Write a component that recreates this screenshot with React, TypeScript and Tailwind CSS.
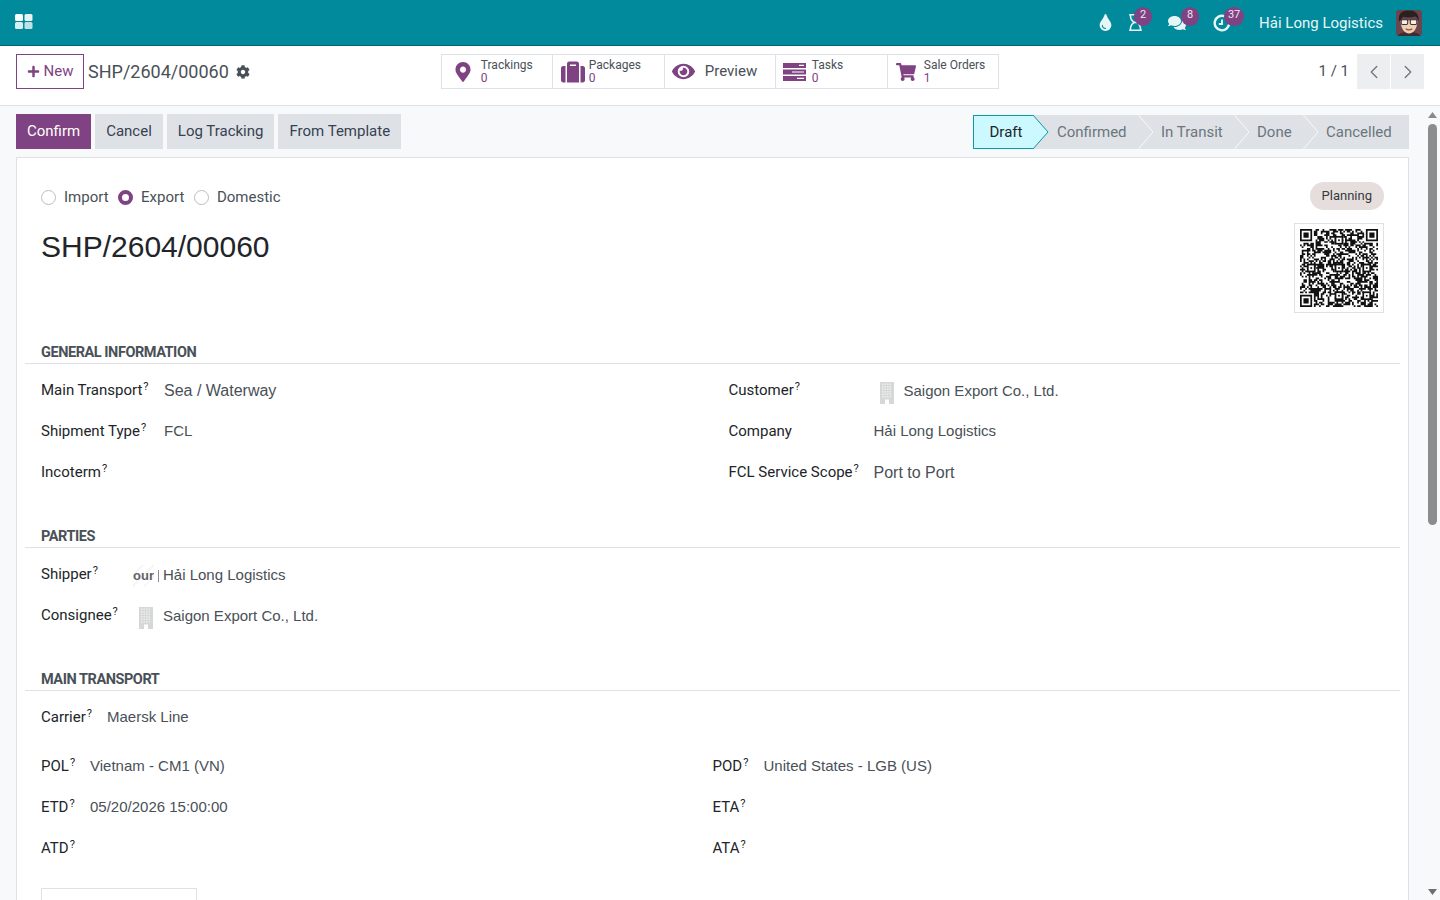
import React from "react";
import { ChevronLeft, ChevronRight } from "lucide-react";
import {
  FaCog,
  FaComments,
  FaEye,
  FaMapMarkerAlt,
  FaPlus,
  FaRegHourglass,
  FaShoppingCart,
  FaSuitcase,
  FaTint,
} from "react-icons/fa";

const roboto = "font-['Roboto',sans-serif]";
const liberation = "font-['Liberation_Sans',sans-serif]";

const AppsIcon = () => (
  <svg width="18" height="15" viewBox="0 0 18 15" fill="#fff">
    <rect x="0" y="0" width="8" height="7" rx="1.5" />
    <rect x="9.5" y="0" width="8" height="7" rx="1.5" opacity="0.9" />
    <rect x="0" y="8" width="8" height="7" rx="1.5" opacity="0.85" />
    <rect x="9.5" y="8" width="8" height="7" rx="1.5" opacity="0.75" />
  </svg>
);

const ClockIcon = () => (
  <svg width="18" height="18" viewBox="0 0 18 18" fill="none" stroke="#e6f6f7" strokeWidth="2.4">
    <path d="M11.5 2.2A7.3 7.3 0 1 0 16.3 9" strokeLinecap="round" />
    <path d="M9 5.5V10H5.8" strokeWidth="2" />
  </svg>
);

const TasksIcon = () => (
  <svg width="23" height="20" viewBox="0 0 23 20" fill="#7f4282">
    <path d="M0 1h23v5H0zM0 7.500h23v5H0zM0 14h23v5H0z" />
    <path d="M16 2.800h5v1.200h-5zM9 9.400h12v1.200H9zM14 15.800h7v1.200h-7z" fill="#fff" />
  </svg>
);

const Avatar = () => (
  <svg width="26" height="26" viewBox="3 3 20 20" className="rounded-[3px]">
    <rect x="3" y="3" width="20" height="20" fill="#6b4450" />
    <path d="M3 26c1-5 5-6 10-6s9 1 10 6z" fill="#3d2c30" />
    <path d="M6.500 11c0 6 3 10 6.500 10s6.500-4 6.500-10z" fill="#f1cdb0" />
    <path d="M5.500 12C4 6 8 3 13 3.500c3-.5 8 1 7.500 8.500-1-2-1.500-3.500-2.500-4-3 1-7 1-9.500.2C7.500 9 7 10.500 5.500 12z" fill="#2a2020" />
    <rect x="7" y="10.500" width="5" height="3.600" rx="1" fill="#f7efe6" stroke="#333" strokeWidth="0.8" />
    <rect x="14" y="10.500" width="5" height="3.600" rx="1" fill="#f7efe6" stroke="#333" strokeWidth="0.8" />
    <path d="M10.500 17.500c1.500 1 3.500 1 5 0" stroke="#8a5145" strokeWidth="0.9" fill="none" />
  </svg>
);

const windowRows = [1.5, 4, 6.5, 9, 11.5, 14];
const windowCols = [2, 4.500, 7, 9.500];

const BuildingIcon = () => (
  <svg width="14" height="22" viewBox="0 0 14 22" className="shrink-0">
    <rect width="14" height="22" fill="#d6d8d8" />
    <g fill="#eceded">
      {windowRows.map((y) =>
        windowCols.map((x) => <rect key={`${x}-${y}`} x={x} y={y} width="1.5" height="1.5" />),
      )}
    </g>
    <rect x="5" y="17.500" width="4" height="4.500" fill="#fff" />
  </svg>
);

// fake qr pattern, same modules on every render
const QrCode = () => {
  const size = 45;
  const inFinder = (x: number, y: number) =>
    (x < 8 && y < 8) || (x >= size - 8 && y < 8) || (x < 8 && y >= size - 8);
  const cells: string[] = [];
  let seed = 60;
  for (let y = 0; y < size; y++) {
    for (let x = 0; x < size; x++) {
      seed = (seed * 1103515245 + 12345) & 0x7fffffff;
      if (!inFinder(x, y) && (seed >> 16) % 100 < 52) {
        cells.push(`M${x} ${y}h1v1h-1z`);
      }
    }
  }
  const finder = (x: number, y: number) =>
    `M${x} ${y}h7v7h-7zM${x + 1} ${y + 1}v5h5v-5zM${x + 2} ${y + 2}h3v3h-3z`;
  const align = [
    [22, 6],
    [6, 22],
    [22, 22],
    [38, 22],
    [22, 38],
    [38, 38],
  ];
  return (
    <svg width="78" height="78" viewBox="0 0 45 45">
      <path d={cells.join("")} fill="#111" />
      {align.map(([x, y]) => (
        <g key={`${x}-${y}`}>
          <rect x={x - 2} y={y - 2} width="5" height="5" fill="#111" />
          <rect x={x - 1} y={y - 1} width="3" height="3" fill="#fff" />
          <rect x={x} y={y} width="1" height="1" fill="#111" />
        </g>
      ))}
      <path
        d={finder(0, 0) + finder(size - 7, 0) + finder(0, size - 7)}
        fill="#111"
        fillRule="evenodd"
      />
    </svg>
  );
};

const NavBadge = ({ children, className }: { children: React.ReactNode; className: string }) => (
  <span
    className={`absolute top-[-7px] flex h-[19px] items-center justify-center rounded-full bg-[#7f4282] pb-[4px] text-[11px] leading-none text-[#f1e6f2] ${className}`}
  >
    {children}
  </span>
);

const Navbar = () => (
  <header className={`flex h-[46px] shrink-0 items-center border-b border-[#00636f] bg-[#008a9c] ${roboto}`}>
    <div className="mb-[2px] ml-[15px]">
      <AppsIcon />
    </div>
    <div className="ml-auto flex items-center text-[#e6f6f7]">
      <FaTint className="text-[17px]" />
      <div className="relative ml-[13px] flex">
        <FaRegHourglass className="text-[17px]" />
        <NavBadge className="left-[7px] w-[18px]">2</NavBadge>
      </div>
      <div className="relative ml-[24px] flex">
        <FaComments className="text-[18px]" />
        <NavBadge className="left-[13px] w-[18px]">8</NavBadge>
      </div>
      <div className="relative ml-[27px] flex">
        <ClockIcon />
        <NavBadge className="left-[11px] w-[20px]">37</NavBadge>
      </div>
      <span className="ml-[28px] pt-[2px] text-[15px]">Hải Long Logistics</span>
      <div className="ml-[13px] mr-[18px] flex">
        <Avatar />
      </div>
    </div>
  </header>
);

const StatButton = ({
  icon,
  label,
  value,
  width,
  iconBox,
}: {
  icon: React.ReactNode;
  label: string;
  value: string;
  width: string;
  iconBox: string;
}) => (
  <div className={`flex h-full items-center border-r border-[#dee2e6] last:border-r-0 ${width}`}>
    <div className={`flex shrink-0 justify-center text-[#7f4282] ${iconBox}`}>{icon}</div>
    <div className="text-[12px] leading-[13px] text-[#495057]">
      <div>{label}</div>
      <div className="text-[#7f4282]">{value}</div>
    </div>
  </div>
);

const ControlPanel = () => (
  <div className={`relative flex h-[60px] shrink-0 items-start border-b border-[#dee2e6] bg-white pl-4 pt-2 ${roboto}`}>
    <button className="flex h-[35px] w-[68px] items-center justify-center gap-[4px] border border-[#7f4282] text-[15px] text-[#7f4282]">
      <FaPlus className="text-[13px]" />
      New
    </button>
    <div className="flex h-[35px] items-center">
      <span className="ml-[4px] text-[18px] text-[#495057]">SHP/2604/00060</span>
      <FaCog className="ml-[7px] text-[14px] text-[#495057]" />
    </div>
    <div className="ml-[191px] flex h-[35px] w-[558px] border border-[#dee2e6] text-[#495057]">
      <StatButton width="w-[111px]" iconBox="w-[39px] pl-[4px]" icon={<FaMapMarkerAlt className="text-[20px]" />} label="Trackings" value="0" />
      <StatButton width="w-[112px]" iconBox="w-[36px] pl-[4px]" icon={<FaSuitcase className="text-[24px]" />} label="Packages" value="0" />
      <div className="flex h-full w-[111px] items-center border-r border-[#dee2e6]">
        <FaEye className="ml-[7px] text-[23px] text-[#7f4282]" />
        <span className="ml-[10px] text-[15px]">Preview</span>
      </div>
      <StatButton width="w-[112px]" iconBox="w-[36px] pl-[2px]" icon={<TasksIcon />} label="Tasks" value="0" />
      <StatButton width="w-[110px]" iconBox="w-[36px]" icon={<FaShoppingCart className="text-[20px]" />} label="Sale Orders" value="1" />
    </div>
    <div className="ml-auto mr-4 flex h-[35px] items-center">
      <span className="mr-[8px] text-[15px] text-[#495057]">1 / 1</span>
      <div className="mr-px flex h-full w-[33px] items-center justify-center bg-[#eceef0] text-[#6c757d]">
        <ChevronLeft size={22} strokeWidth={1.4} />
      </div>
      <div className="flex h-full w-[33px] items-center justify-center bg-[#eceef0] text-[#6c757d]">
        <ChevronRight size={22} strokeWidth={1.4} />
      </div>
    </div>
  </div>
);

const ActionButton = ({ children, primary }: { children: React.ReactNode; primary?: boolean }) => (
  <button
    className={`h-[35px] px-[11px] text-[15px] ${
      primary ? "bg-[#7f4282] text-white" : "bg-[#dee2e6] text-[#374151]"
    }`}
  >
    {children}
  </button>
);

const Chevron = () => (
  <svg width="15" height="34" viewBox="0 0 15 34" className="absolute left-full top-0 z-10 overflow-visible">
    <path d="M0 -0.500L15 17L0 34.500" fill="none" stroke="#f8f9fa" strokeWidth="1" />
  </svg>
);

const StatusStep = ({ label, width }: { label: string; width: string }) => (
  <div className={`relative flex h-full items-center text-[#6c757d] ${width}`}>
    {label}
    <Chevron />
  </div>
);

const StatusBar = () => (
  <div className="flex h-[34px] w-[436px] items-center self-end bg-[#dee2e6] text-[15px]">
    <div className="relative flex h-full w-[60px] items-center border-y border-l border-[#0a9aa8] bg-[#ccf9ff] pl-[15.5px] text-[#212529]">
      Draft
      <svg width="15" height="34" viewBox="0 0 15 34" className="absolute left-full top-[-1px] z-10 overflow-visible">
        <path d="M0 0L15 17L0 34z" fill="#ccf9ff" />
        <path d="M0 0L15 17L0 34" fill="none" stroke="#0a9aa8" strokeWidth="1" />
      </svg>
    </div>
    <StatusStep label="Confirmed" width="w-[105px] pl-[24px]" />
    <StatusStep label="In Transit" width="w-[96px] pl-[23px]" />
    <StatusStep label="Done" width="w-[69px] pl-[23px]" />
    <div className="flex h-full flex-1 items-center pl-[23px] text-[#6c757d]">Cancelled</div>
  </div>
);

const Radio = ({ label, checked }: { label: string; checked?: boolean }) => (
  <label className="flex items-center gap-[8px]">
    {checked ? (
      <span className="h-[15px] w-[15px] rounded-full border-[4px] border-[#7f4282] bg-white" />
    ) : (
      <span className="h-[15px] w-[15px] rounded-full border border-[#bdbdbd] bg-white" />
    )}
    {label}
  </label>
);

const SectionTitle = ({ children, className }: { children: React.ReactNode; className: string }) => (
  <div className={`h-[22px] border-b border-[#dee2e6] pl-4 pt-px text-[14.5px] font-bold leading-[20px] tracking-[-0.45px] text-[#495057] ${className}`}>
    {children}
  </div>
);

const Field = ({
  label,
  help,
  labelWidth,
  valueClass,
  children,
}: {
  label: string;
  help?: boolean;
  labelWidth: string;
  valueClass?: string;
  children?: React.ReactNode;
}) => (
  <div className="flex h-[41px] items-center">
    <div className={`shrink-0 text-[15px] text-[#212529] ${labelWidth}`}>
      {label}
      {help && <sup className="ml-px text-[11px]">?</sup>}
    </div>
    <div className={`flex items-center text-[15px] text-[#495057] ${liberation} ${valueClass ?? ""}`}>{children}</div>
  </div>
);

const Sheet = () => (
  <div className={`mx-4 mt-2 border border-[#dee2e6] bg-white px-2 pt-6 ${roboto}`}>
    <div className="flex h-[131px] justify-between pl-4 pr-4">
      <div>
        <div className="flex h-[30px] items-center gap-[9.5px] text-[15px] text-[#495057]">
          <Radio label="Import" />
          <Radio label="Export" checked />
          <Radio label="Domestic" />
        </div>
        <h1 className={`mt-[18px] text-[30px] leading-[34px] text-[#212529] ${liberation}`}>SHP/2604/00060</h1>
      </div>
      <div className="flex flex-col items-end">
        <span className="flex h-[28px] items-center rounded-full bg-[#e6dedc] px-[12px] text-[13px] text-[#343a40]">
          Planning
        </span>
        <div className="mt-[13px] flex h-[90px] w-[90px] items-center justify-center border border-[#dee2e6]">
          <QrCode />
        </div>
      </div>
    </div>

    <SectionTitle className="mt-[29px]">GENERAL INFORMATION</SectionTitle>
    <div className="grid grid-cols-2 pt-[6px]">
      <div className="pl-4">
        <Field label="Main Transport" help labelWidth="w-[123px]">
          <span className="text-[16px]">Sea / Waterway</span>
        </Field>
        <Field label="Shipment Type" help labelWidth="w-[123px]">FCL</Field>
        <Field label="Incoterm" help labelWidth="w-[123px]" />
      </div>
      <div className="pl-4">
        <Field label="Customer" help labelWidth="w-[145px]" valueClass="mt-[2px]">
          <span className="ml-[6px] mr-[10px] mt-[2px] flex"><BuildingIcon /></span>
          Saigon Export Co., Ltd.
        </Field>
        <Field label="Company" labelWidth="w-[145px]">Hải Long Logistics</Field>
        <Field label="FCL Service Scope" help labelWidth="w-[145px]">
          <span className="text-[16px]">Port to Port</span>
        </Field>
      </div>
    </div>

    <SectionTitle className="mt-[33px]">PARTIES</SectionTitle>
    <div className="pl-4 pt-[6px]">
      <Field label="Shipper" help labelWidth="w-[92px]" valueClass="mt-[2px]">
        <span className="flex h-[22px] w-[21px] items-center overflow-hidden bg-[repeating-linear-gradient(135deg,#ffffff,#ffffff_6px,#f6f6f6_6px,#f6f6f6_8px)] text-[13px] font-bold leading-[16px] text-[#5f6368]">
          our
        </span>
        <span className="ml-[4px] mr-[4px] h-[12px] w-px bg-[#8a8f94]" />
        Hải Long Logistics
      </Field>
      <Field label="Consignee" help labelWidth="w-[98px]" valueClass="mt-[2px]">
        <span className="mr-[10px] mt-[2px] flex"><BuildingIcon /></span>
        Saigon Export Co., Ltd.
      </Field>
    </div>

    <SectionTitle className="mt-[33px]">MAIN TRANSPORT</SectionTitle>
    <div className="pl-4 pt-[6px]">
      <Field label="Carrier" help labelWidth="w-[66px]">Maersk Line</Field>
    </div>
    <div className="mt-2 grid grid-cols-2">
      <div className="pl-4">
        <Field label="POL" help labelWidth="w-[49px]">Vietnam - CM1 (VN)</Field>
        <Field label="ETD" help labelWidth="w-[49px]">05/20/2026 15:00:00</Field>
        <Field label="ATD" help labelWidth="w-[49px]" />
      </div>
      <div>
        <Field label="POD" help labelWidth="w-[51px]">United States - LGB (US)</Field>
        <Field label="ETA" help labelWidth="w-[51px]" />
        <Field label="ATA" help labelWidth="w-[51px]" />
      </div>
    </div>
    <div className="ml-4 mt-[19px] h-[60px] w-[156px] border border-[#dee2e6]" />
  </div>
);

const Scrollbar = () => (
  <div className="flex w-[15px] shrink-0 flex-col items-center bg-[#f8f9fa]">
    <svg width="9" height="6" viewBox="0 0 9 6" className="mt-[6px] shrink-0">
      <path d="M4.500 0L9 6H0z" fill="#8a8a8a" />
    </svg>
    <div className="mt-[6px] h-[401px] w-[9px] shrink-0 rounded-full bg-[#8c8c8c]" />
    <svg width="9" height="6" viewBox="0 0 9 6" className="mb-[5px] mt-auto shrink-0">
      <path d="M4.500 6L9 0H0z" fill="#6f6f6f" />
    </svg>
  </div>
);

export default function App() {
  return (
    <div className="flex h-[900px] w-[1440px] flex-col overflow-hidden bg-white">
      <Navbar />
      <ControlPanel />
      <div className="flex min-h-0 flex-1">
        <main className={`min-w-0 flex-1 overflow-hidden bg-[#f8f9fa] ${roboto}`}>
          <div className="flex items-center justify-between pl-4 pr-4 pt-[8px]">
            <div className="flex gap-[4px]">
              <ActionButton primary>Confirm</ActionButton>
              <ActionButton>Cancel</ActionButton>
              <ActionButton>Log Tracking</ActionButton>
              <ActionButton>From Template</ActionButton>
            </div>
            <StatusBar />
          </div>
          <Sheet />
        </main>
        <Scrollbar />
      </div>
    </div>
  );
}
